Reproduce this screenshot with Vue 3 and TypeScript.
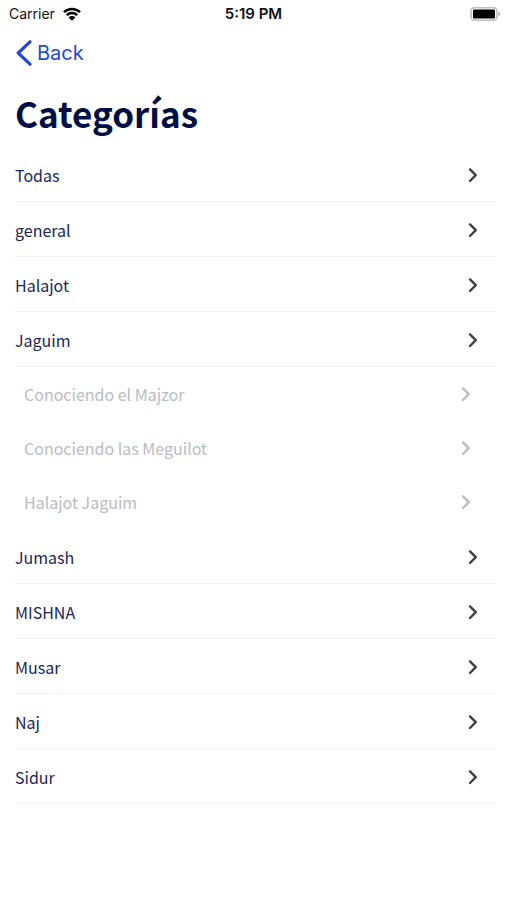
<script setup lang="ts">
interface Category {
  name: string
  children?: string[]
}

const categories: Category[] = [
  { name: 'Todas' },
  { name: 'general' },
  { name: 'Halajot' },
  {
    name: 'Jaguim',
    children: ['Conociendo el Majzor', 'Conociendo las Meguilot', 'Halajot Jaguim'],
  },
  { name: 'Jumash' },
  { name: 'MISHNA' },
  { name: 'Musar' },
  { name: 'Naj' },
  { name: 'Sidur' },
]
</script>

<template>
  <div class="screen">
    <div class="status">
      <div class="carrier">
        <span>Carrier</span>
        <svg class="wifi" viewBox="0 0 18 14" aria-hidden="true">
          <path d="M1 5.2a11.4 11.4 0 0 1 16 0M3.8 8.1a7.4 7.4 0 0 1 10.4 0" fill="none" stroke="#000" stroke-width="2.5" />
          <path d="M9 13.8 5.6 10.4a4.8 4.8 0 0 1 6.8 0z" fill="#000" />
        </svg>
      </div>
      <span class="time">5:19 PM</span>
      <svg class="battery" viewBox="0 0 32 14" aria-hidden="true">
        <rect x="1" y="0.8" width="26" height="12.4" rx="3.4" fill="#fff" stroke="#bdbdbd" stroke-width="1.6" />
        <rect x="3" y="2.6" width="22" height="8.8" rx="1" fill="#000" />
        <path d="M28.4 4.6c2.6 1 2.6 3.8 0 4.8z" fill="#b4b4b4" />
      </svg>
    </div>

    <nav class="nav">
      <button type="button" class="back">
        <svg class="back-icon" viewBox="0 0 16 26" aria-hidden="true">
          <path d="M14 1.8 2.2 13 14 24.2" fill="none" stroke="currentColor" stroke-width="3.2" stroke-linecap="round" stroke-linejoin="round" />
        </svg>
        <span>Back</span>
      </button>
    </nav>

    <main class="content">
      <h1>Categorías</h1>
      <ul class="list">
        <li v-for="category in categories" :key="category.name">
          <button type="button" class="row">
            <span>{{ category.name }}</span>
            <svg class="chevron" viewBox="0 0 10 16" aria-hidden="true">
              <path d="M2 2.4 7.8 8.2 2 14" />
            </svg>
          </button>
          <ul v-if="category.children" class="list">
            <li v-for="child in category.children" :key="child">
              <button type="button" class="row sub">
                <span>{{ child }}</span>
                <svg class="chevron" viewBox="0 0 10 16" aria-hidden="true">
                  <path d="M2 2.4 7.8 8.2 2 14" />
                </svg>
              </button>
            </li>
          </ul>
        </li>
      </ul>
    </main>
  </div>
</template>

<style>
body {
  background: #fff;
}
</style>

<style scoped>
.screen {
  min-height: 100vh;
  box-sizing: border-box;
  font-family: "Noto Sans CJK SC", "Noto Sans", sans-serif;
  color: #020f45;
}

.status {
  display: grid;
  grid-template-columns: 1fr auto 1fr;
  align-items: center;
  height: 28px;
  padding: 0 5px;
  font-family: Inter, "Liberation Sans", sans-serif;
  font-size: 15px;
  line-height: 20px;
  color: #111;
}

.carrier {
  display: flex;
  align-items: center;
  gap: 8px;
  padding-left: 4px;
  font-size: 14px;
}

.wifi {
  width: 18px;
  height: 14px;
}

.time {
  font-weight: 600;
}

.battery {
  justify-self: end;
  width: 32px;
  height: 14px;
}

button {
  margin: 0;
  border: 0;
  background: none;
  font: inherit;
  color: inherit;
  text-align: left;
  cursor: pointer;
}

.nav {
  display: flex;
  align-items: center;
  height: 49px;
  padding: 0 16px;
}

.back {
  display: flex;
  align-items: center;
  gap: 5px;
  padding: 0;
  font-family: Inter, "Liberation Sans", sans-serif;
  font-size: 20px;
  line-height: 28px;
  color: #2348d8;
}

.back-icon {
  width: 16px;
  height: 26px;
}

.content {
  padding: 0 11px 0 15px;
}

h1 {
  margin: 0;
  padding: 12px 0 10px;
  font-size: 35px;
  line-height: 48px;
  font-weight: 700;
}

.list {
  margin: 0;
  padding: 0;
  list-style: none;
}

.row {
  display: flex;
  align-items: center;
  justify-content: space-between;
  box-sizing: border-box;
  width: 100%;
  height: 55px;
  padding: 2px 18px 0 0;
  border-bottom: 1px solid #f3f3f4;
  font-size: 16px;
  line-height: 24px;
  color: #1b2658;
}

.sub {
  height: 54px;
  padding: 0 25px 0 9px;
  border-bottom: 0;
  color: #b9bcc2;
}

.chevron {
  width: 10px;
  height: 16px;
  fill: none;
  stroke: #404040;
  stroke-width: 2.4;
  stroke-linecap: round;
  stroke-linejoin: round;
}

.sub .chevron {
  stroke: #bdbdbd;
}
</style>
